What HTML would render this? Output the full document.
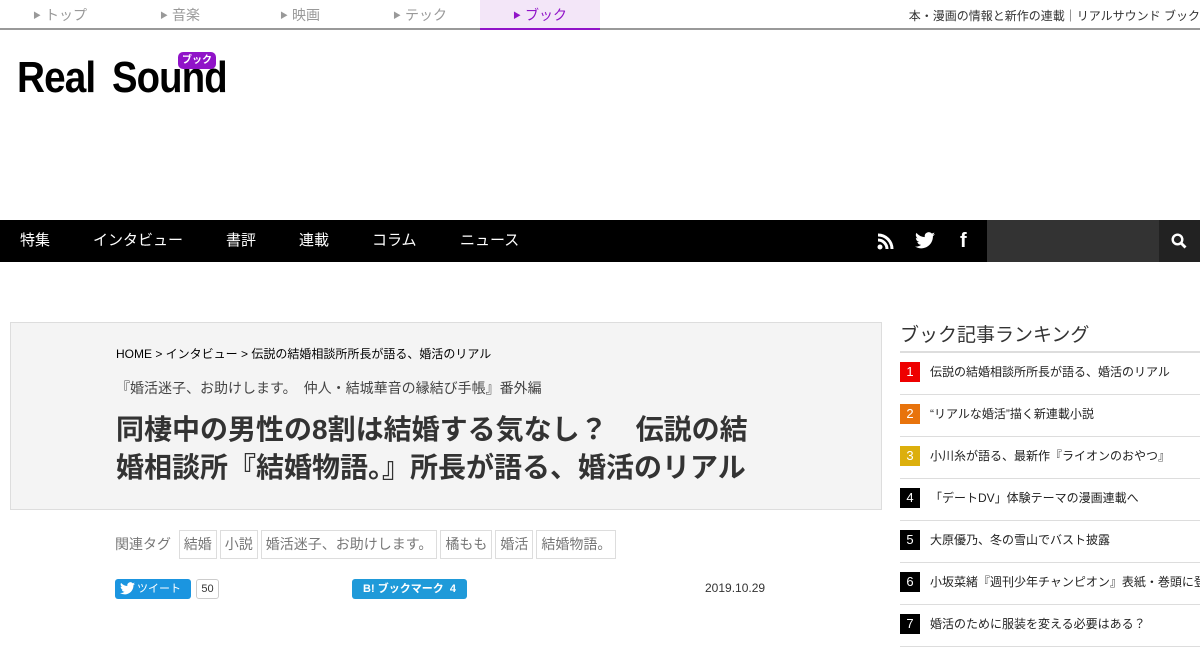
<!DOCTYPE html>
<html><head><meta charset="utf-8"><style>
*{margin:0;padding:0;box-sizing:border-box}
body{width:1200px;height:630px;overflow:hidden;background:#fff;font-family:"Liberation Sans","Noto Sans CJK JP",sans-serif;position:relative;color:#333}
.a{position:absolute}
.top{left:0;top:0;width:1200px;height:30px;border-bottom:2px solid #999}
.tab{position:absolute;top:0;width:120px;height:28px;font-size:14px;color:#999;line-height:30px;text-align:center}
.tab b{font-size:8px;font-weight:normal;margin-right:4px;vertical-align:2px}
.nav{left:0;top:220px;width:1200px;height:42px;background:#000;color:#fff;font-size:15px}
.nav span{position:absolute;top:0;line-height:42px}
.tag{display:inline-block;border:1px solid #ddd;padding:0 4px;height:29px;line-height:27px;margin-right:3px;font-size:14px;color:#777}
.rk{position:absolute;left:900px;width:300px;height:42px;border-bottom:1px solid #ddd;font-size:12px;color:#222}
.rk i{position:absolute;left:0;top:9px;width:20px;height:20px;color:#fff;font-style:normal;text-align:center;line-height:20px;font-size:13px}
.rk span{position:absolute;left:30px;top:10px;white-space:nowrap}
.logo{position:absolute;top:54px;font-size:44px;font-weight:bold;color:#000;line-height:48px;transform-origin:left;letter-spacing:-1px}
</style></head><body>
<div class="a top">
<div class="tab" style="left:0"><b>▶</b>トップ</div>
<div class="tab" style="left:120px"><b>▶</b>音楽</div>
<div class="tab" style="left:240px"><b>▶</b>映画</div>
<div class="tab" style="left:360px"><b>▶</b>テック</div>
<div class="tab" style="left:480px;background:#f3e6f8;color:#9013c8;border-bottom:2px solid #9013c8;height:30px"><b>▶</b>ブック</div>
<div class="a" style="right:0;top:7px;font-size:12px;color:#333">本・漫画の情報と新作の連載｜リアルサウンド ブック</div>
</div>
<div class="logo" style="left:17px;transform:scaleX(0.88)">Real</div>
<div class="logo" style="left:112px;transform:scaleX(0.87)">Sound</div>
<div class="a" style="left:178px;top:52px;width:38px;height:17px;background:#9013c8;border-radius:5px;color:#fff;font-size:10px;font-weight:bold;text-align:center;line-height:17px">ブック</div>
<div class="a nav">
<span style="left:20px">特集</span><span style="left:93px">インタビュー</span><span style="left:226px">書評</span><span style="left:299px">連載</span><span style="left:372px">コラム</span><span style="left:460px">ニュース</span>
<div class="a" style="left:987px;top:0;width:172px;height:42px;background:#333"></div>
<div class="a" style="left:1159px;top:0;width:41px;height:42px;background:#222"></div>
<svg class="a" style="left:877px;top:13px" width="17" height="17" viewBox="0 0 17 17"><circle cx="3" cy="14" r="2.5" fill="#fff"/><path d="M1 7a9 9 0 0 1 9 9M1 2a14 14 0 0 1 14 14" stroke="#fff" stroke-width="3" fill="none"/></svg>
<svg class="a" style="left:915px;top:12px" width="20" height="17" viewBox="0 0 24 20"><path fill="#fff" d="M24 2.4a10 10 0 0 1-2.8.8A5 5 0 0 0 23.3.4a10 10 0 0 1-3.1 1.2A4.9 4.9 0 0 0 11.8 6 14 14 0 0 1 1.7.9a4.9 4.9 0 0 0 1.5 6.6 5 5 0 0 1-2.2-.6 4.9 4.9 0 0 0 3.9 4.8 5 5 0 0 1-2.2.1 4.9 4.9 0 0 0 4.6 3.4A9.9 9.9 0 0 1 0 17.2 14 14 0 0 0 7.5 19.4c9 0 14-7.5 14-14v-.6A10 10 0 0 0 24 2.4z"/></svg>
<div class="a" style="left:960px;top:9px;font-size:20px;font-weight:bold;line-height:24px">f</div>
<svg class="a" style="left:1171px;top:13px" width="16" height="16" viewBox="0 0 16 16"><circle cx="6.5" cy="6.5" r="4.8" stroke="#fff" stroke-width="2.4" fill="none"/><path d="M10 10l4.5 4.5" stroke="#fff" stroke-width="2.8"/></svg>
</div>
<div class="a" style="left:10px;top:322px;width:872px;height:188px;background:#f4f4f4;border:1px solid #ddd"></div>
<div class="a" style="left:116px;top:345px;font-size:12px;color:#000">HOME &gt; インタビュー &gt; 伝説の結婚相談所所長が語る、婚活のリアル</div>
<div class="a" style="left:116px;top:378px;font-size:14px;color:#444">『婚活迷子、お助けします。　仲人・結城華音の縁結び手帳』番外編</div>
<div class="a" style="left:116px;top:411px;width:700px;font-size:28px;font-weight:bold;line-height:38px;color:#333;white-space:nowrap">同棲中の男性の8割は結婚する気なし？　伝説の結<br>婚相談所『結婚物語。』所長が語る、婚活のリアル</div>
<div class="a" style="left:115px;top:530px;font-size:14px;color:#777;line-height:29px;white-space:nowrap">関連タグ&nbsp;&nbsp;<span class="tag">結婚</span><span class="tag">小説</span><span class="tag">婚活迷子、お助けします。</span><span class="tag">橘もも</span><span class="tag">婚活</span><span class="tag">結婚物語。</span></div>
<div class="a" style="left:115px;top:579px;width:76px;height:20px;background:#1b95e0;border-radius:3px;color:#fff;font-size:11px;line-height:20px;padding-left:22px">ツイート</div>
<svg class="a" style="left:120px;top:582px" width="15" height="13" viewBox="0 0 24 20"><path fill="#fff" d="M24 2.4a10 10 0 0 1-2.8.8A5 5 0 0 0 23.3.4a10 10 0 0 1-3.1 1.2A4.9 4.9 0 0 0 11.8 6 14 14 0 0 1 1.7.9a4.9 4.9 0 0 0 1.5 6.6 5 5 0 0 1-2.2-.6 4.9 4.9 0 0 0 3.9 4.8 5 5 0 0 1-2.2.1 4.9 4.9 0 0 0 4.6 3.4A9.9 9.9 0 0 1 0 17.2 14 14 0 0 0 7.5 19.4c9 0 14-7.5 14-14v-.6A10 10 0 0 0 24 2.4z"/></svg>
<div class="a" style="left:196px;top:579px;width:23px;height:20px;border:1px solid #ccc;border-radius:3px;font-size:11px;text-align:center;line-height:18px;color:#333">50</div>
<div class="a" style="left:352px;top:579px;width:115px;height:20px;background:#1f9ad9;border-radius:3px;color:#fff;font-size:11px;font-weight:bold;line-height:20px;text-align:center">B! ブックマーク&nbsp;&nbsp;4</div>
<div class="a" style="left:705px;top:581px;font-size:12px;color:#333">2019.10.29</div>
<div class="a" style="left:900px;top:320px;font-size:19px;color:#333">ブック記事ランキング</div>
<div class="a" style="left:900px;top:351px;width:300px;border-top:2px solid #ddd"></div>
<div class="rk" style="top:353px"><i style="background:#e00">1</i><span>伝説の結婚相談所所長が語る、婚活のリアル</span></div>
<div class="rk" style="top:395px"><i style="background:#e8730c">2</i><span>“リアルな婚活”描く新連載小説</span></div>
<div class="rk" style="top:437px"><i style="background:#dcaf0d">3</i><span>小川糸が語る、最新作『ライオンのおやつ』</span></div>
<div class="rk" style="top:479px"><i style="background:#000">4</i><span>「デートDV」体験テーマの漫画連載へ</span></div>
<div class="rk" style="top:521px"><i style="background:#000">5</i><span>大原優乃、冬の雪山でバスト披露</span></div>
<div class="rk" style="top:563px"><i style="background:#000">6</i><span>小坂菜緒『週刊少年チャンピオン』表紙・巻頭に登場</span></div>
<div class="rk" style="top:605px"><i style="background:#000">7</i><span>婚活のために服装を変える必要はある？</span></div>
</body></html>
